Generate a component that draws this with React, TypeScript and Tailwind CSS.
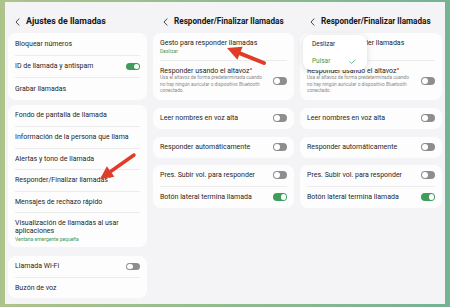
import React from 'react';

const Toggle = ({ on }: { on?: boolean }) =>
  on ? (
    <div className="w-[14px] h-[7.5px] rounded-full bg-[#3f9d5c] flex items-center justify-end px-[1px] shrink-0">
      <div className="w-[5.5px] h-[5.5px] rounded-full bg-white" />
    </div>
  ) : (
    <div className="w-[14px] h-[7.5px] rounded-full bg-[#8e8e90] flex items-center px-[1px] shrink-0">
      <div className="w-[5.5px] h-[5.5px] rounded-full bg-white" />
    </div>
  );

const Dot = () => (
  <span className="inline-block w-[2px] h-[2px] rounded-full bg-[#f0592a] align-top ml-[1px] mt-[1px]" />
);

const Divider = () => <div className="mx-[7px] h-px bg-[#ececec]" />;

const Card = ({ children }: { children: React.ReactNode }) => (
  <div className="mx-[3px] bg-[#fdfdfd] rounded-[8px] flex flex-col">{children}</div>
);

const Row = ({ label, toggle, h = 'h-[22px]' }: { label: React.ReactNode; toggle?: 'on' | 'off'; h?: string }) => (
  <div className={`${h} flex items-center justify-between px-[7px] text-[7px] text-[#1f1f1f]`}>
    <span className="whitespace-nowrap">{label}</span>
    {toggle && <Toggle on={toggle === 'on'} />}
  </div>
);

const Header = ({ title, pl, size }: { title: string; pl: string; size: string }) => (
  <div className={`h-[31px] pt-[8px] flex items-center gap-[6px] ${pl}`}>
    <svg width="5" height="8" viewBox="0 0 5 8" className="shrink-0">
      <path d="M4 0.8 L1 4 L4 7.2" fill="none" stroke="#333" strokeWidth="0.9" strokeLinecap="round" strokeLinejoin="round" />
    </svg>
    <span className={`${size} font-bold text-[#161616] whitespace-nowrap`}>{title}</span>
  </div>
);

const MainPanel = () => (
  <div className="w-[145px] h-full bg-[#f4f4f6] flex flex-col">
    <Header title="Ajustes de llamadas" pl="pl-[10px]" size="text-[8.8px]" />
    <Card>
      <Row label="Bloquear números" />
      <Divider />
      <Row label="ID de llamada y antispam" toggle="on" h="h-[21px]" />
      <Divider />
      <Row label="Grabar llamadas" h="h-[22px]" />
    </Card>
    <div className="h-[5px]" />
    <Card>
      <Row label="Fondo de pantalla de llamada" h="h-[21px]" />
      <Divider />
      <Row label="Información de la persona que llama" h="h-[20.5px]" />
      <Divider />
      <Row label="Alertas y tono de llamada" h="h-[20.5px]" />
      <Divider />
      <Row label={<>Responder/Finalizar llamadas<Dot /></>} h="h-[20.5px]" />
      <Divider />
      <Row label="Mensajes de rechazo rápido" h="h-[20.5px]" />
      <Divider />
      <div className="px-[7px] pt-[6px] pb-[4px] flex flex-col">
        <span className="text-[7px] leading-[8px] text-[#1f1f1f]">
          Visualización de llamadas al usar
          <br />
          aplicaciones
        </span>
        <span className="text-[5px] leading-[8px] text-[#3c9a58]">Ventana emergente pequeña</span>
      </div>
    </Card>
    <div className="h-[9px]" />
    <Card>
      <Row label="Llamada Wi-Fi" toggle="off" h="h-[21px]" />
      <Divider />
      <Row label="Buzón de voz" h="h-[20px]" />
    </Card>
  </div>
);

const AnswerPanel = ({ menu, w }: { menu?: boolean; w: string }) => (
  <div className={`${w} h-full bg-[#f4f4f6] flex flex-col relative`}>
    <Header title="Responder/Finalizar llamadas" pl="pl-[13px]" size="text-[8.2px]" />
    <Card>
      <div className="h-[27px] px-[7px] pt-[6px] flex flex-col">
        <span className="text-[7px] leading-[8px] text-[#1f1f1f] whitespace-nowrap">Gesto para responder llamadas</span>
        <span className="text-[5px] leading-[8px] text-[#3c9a58]">Deslizar</span>
      </div>
      <Divider />
      <div className="px-[7px] pt-[6px] pb-[5px] flex items-center justify-between">
        <div className="flex flex-col">
          <span className="text-[7px] leading-[8px] text-[#1f1f1f] whitespace-nowrap">
            Responder usando el altavoz<Dot />
          </span>
          <span className="text-[4.8px] leading-[6.5px] text-[#8a8a8a] whitespace-nowrap">
            Usa el altavoz de forma predeterminada cuando
            <br />
            no hay ningún auricular o dispositivo Bluetooth
            <br />
            conectado.
          </span>
        </div>
        <Toggle />
      </div>
    </Card>
    <div className="h-[8px]" />
    <Card>
      <Row label="Leer nombres en voz alta" toggle="off" h="h-[21px]" />
    </Card>
    <div className="h-[8px]" />
    <Card>
      <Row label="Responder automáticamente" toggle="off" h="h-[21px]" />
    </Card>
    <div className="h-[7px]" />
    <Card>
      <Row label="Pres. Subir vol. para responder" toggle="off" h="h-[21px]" />
      <Divider />
      <Row label="Botón lateral termina llamada" toggle="on" h="h-[21px]" />
    </Card>
    {menu && (
      <div className="absolute left-[6px] top-[33px] w-[64px] h-[35px] bg-white rounded-[8px] shadow-[0_1px_6px_rgba(0,0,0,0.15)] flex flex-col px-[9px] pt-[5px]">
        <span className="text-[6.5px] leading-[8px] text-[#1f1f1f]">Deslizar</span>
        <div className="mt-[9px] flex items-center justify-between">
          <span className="text-[6.5px] leading-[8px] text-[#3c9a58]">Pulsar</span>
          <svg width="7" height="5" viewBox="0 0 7 5" className="mr-[2px]">
            <path d="M0.5 2.5 L2.6 4.4 L6.5 0.6" fill="none" stroke="#3c9a58" strokeWidth="0.7" />
          </svg>
        </div>
      </div>
    )}
  </div>
);

export default function App() {
  return (
    <div className="w-[450px] h-[307px] relative overflow-hidden bg-gradient-to-r from-[#adc38a] to-[#74b393] font-[Roboto,sans-serif] pt-[2px] pb-[3px] px-[5px]">
      <div className="h-full flex">
        <MainPanel />
        <AnswerPanel w="w-[147px]" />
        <AnswerPanel w="w-[148px]" menu />
      </div>
      <svg className="absolute inset-0 pointer-events-none" width="450" height="307">
        <line x1="134" y1="155" x2="110.6" y2="171.5" stroke="#e03c28" strokeWidth="3.5" strokeLinecap="round" />
        <polygon points="100,179 114.4,176.8 106.9,166.2" fill="#e03c28" />
        <line x1="264" y1="63" x2="240" y2="53.3" stroke="#e03c28" strokeWidth="4" strokeLinecap="round" />
        <polygon points="227,48 242.6,46.8 237.4,59.8" fill="#e03c28" />
      </svg>
    </div>
  );
}
